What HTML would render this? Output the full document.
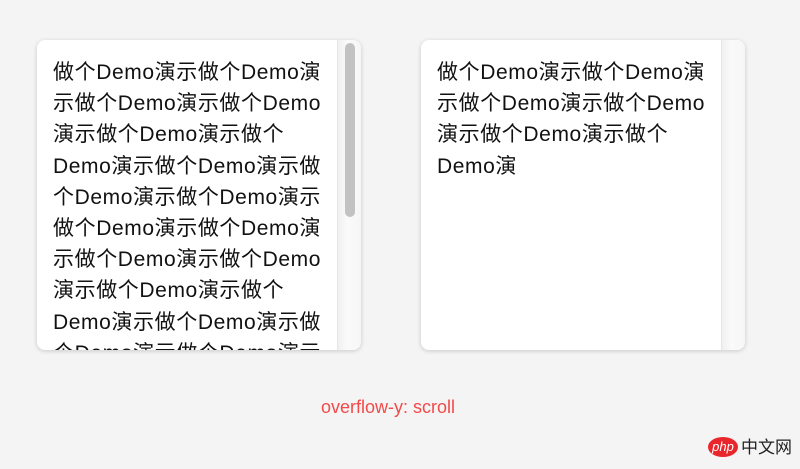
<!DOCTYPE html>
<html><head><meta charset="utf-8"><style>
html,body{margin:0;padding:0;width:800px;height:469px;background:#f4f4f4;overflow:hidden;position:relative;font-family:"Liberation Sans","Noto Sans CJK SC",sans-serif;}
.box{position:absolute;top:40px;width:324px;height:310px;background:#fff;border-radius:8px;box-shadow:0 1px 5px rgba(0,0,0,0.18);overflow:hidden;}
.txt{position:absolute;left:16px;top:17px;font-size:21px;letter-spacing:0.6px;line-height:31.2px;color:#111;white-space:nowrap;}
.track{position:absolute;right:0;top:0;width:23px;height:100%;background:linear-gradient(90deg,#f0f0f0,#fafafa 40%,#f6f6f6);border-left:1px solid #e6e6e6;}
.thumb{position:absolute;left:7px;top:3px;width:10px;height:174px;background:#c2c2c2;border-radius:5px;}
.cap{position:absolute;left:0;width:776px;text-align:center;top:397px;font-size:18px;color:#f24a4a;}
.logo{position:absolute;left:708px;top:435px;}
</style></head><body>
<div class="box" style="left:37px">
<div class="txt">做个Demo演示做个Demo演<br>示做个Demo演示做个Demo<br>演示做个Demo演示做个<br>Demo演示做个Demo演示做<br>个Demo演示做个Demo演示<br>做个Demo演示做个Demo演<br>示做个Demo演示做个Demo<br>演示做个Demo演示做个<br>Demo演示做个Demo演示做<br>个Demo演示做个Demo演示</div>
<div class="track"><div class="thumb"></div></div>
</div>
<div class="box" style="left:421px">
<div class="txt">做个Demo演示做个Demo演<br>示做个Demo演示做个Demo<br>演示做个Demo演示做个<br>Demo演</div>
<div class="track"></div>
</div>
<div class="cap">overflow-y: scroll</div>
<div class="logo">
<svg width="90" height="24" viewBox="0 0 90 24">
<ellipse cx="15" cy="12" rx="15" ry="10" fill="#e8262b"/>
<text x="15" y="16" text-anchor="middle" font-family="Liberation Sans,sans-serif" font-size="13" font-style="italic" fill="#fff">php</text>
<text x="33" y="18" font-family="Noto Sans CJK SC,sans-serif" font-size="17" fill="#222">中文网</text>
</svg>
</div>
</body></html>
